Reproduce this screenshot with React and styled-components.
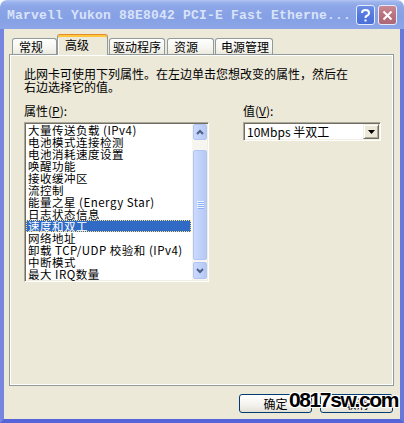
import React from 'react';
import styled, { createGlobalStyle } from 'styled-components';

const Global = createGlobalStyle`
  html, body { margin: 0; padding: 0; background: #fff; }
  #root { width: 404px; height: 423px; }
  * { box-sizing: border-box; }
`;

const CJK = `"Noto Sans CJK SC", "Noto Sans", sans-serif`;

const Window = styled.div`
  width: 404px;
  height: 423px;
  display: flex;
  flex-direction: column;
  font-family: ${CJK};
  font-size: 12px;
  color: #000;
`;

const TitleBar = styled.div`
  height: 29px;
  flex: none;
  display: flex;
  align-items: center;
  padding: 1px 7px 0 7px;
  border-radius: 7px 7px 0 0;
  background: linear-gradient(#b4c6f2 0, #9cb4ec 2px, #8ca6e7 6px, #86a0e5 60%, #8ca6e8 100%);
`;

const Title = styled.div`
  flex: 1;
  font-family: "Liberation Mono", monospace;
  font-weight: bold;
  font-size: 13px;
  letter-spacing: 0.2px;
  color: #d9e3f9;
  white-space: nowrap;
`;

const CaptionButton = styled.div`
  width: 19px;
  height: 20px;
  flex: none;
  border: 1px solid #e6ecfb;
  border-radius: 3px;
  display: flex;
  align-items: center;
  justify-content: center;
  margin-left: ${p => p.$ml}px;
  background: ${p => p.$bg};
`;

const Frame = styled.div`
  flex: 1;
  display: flex;
  flex-direction: column;
  background: #ece9d8;
  border-left: 4px solid #7585e0;
  border-right: 4px solid #6878da;
  border-bottom: 4px solid #5564d8;
  padding: 5px 6px 6px 5px;
`;

const TabRow = styled.div`
  height: 21px;
  display: flex;
  align-items: flex-end;
  position: relative;
  z-index: 1;
  padding-left: 3px;
`;

const Tab = styled.div`
  width: ${p => p.$w}px;
  margin-left: ${p => p.$ml || 0}px;
  padding-left: ${p => p.$pl}px;
  white-space: nowrap;
  border: 1px solid #919b9c;
  border-bottom: none;
  border-radius: 3px 3px 0 0;
  ${p => p.$active ? `
    height: 21px;
    line-height: 14px;
    padding-top: 3px;
    border-top: 1px solid #e68b2c;
    background: #ece9d8;
    box-shadow: inset 0 2px 0 #ffc83c, inset 1px 0 0 #fff;
  ` : `
    height: 16px;
    line-height: 16px;
    margin-bottom: 1px;
    background: linear-gradient(#fefefe, #f6f5f0 60%, #ebe9de);
  `}
`;

const Panel = styled.div`
  height: 332px;
  margin-top: -1px;
  border: 1px solid #919b9c;
  box-shadow: inset 1px 1px 0 #fff, inset -1px -1px 0 #fff;
  padding: 12px 14px 11px;
  display: flex;
  flex-direction: column;
`;

const Desc = styled.div`
  line-height: 13px;
`;

const Fields = styled.div`
  margin-top: 11px;
  display: grid;
  grid-template-columns: 185px 138px;
  column-gap: 34px;
  row-gap: 5px;
  align-items: start;
`;

const Label = styled.div`
  line-height: 13px;
  u { text-decoration: underline; }
`;

const ListBox = styled.div`
  height: 160px;
  display: flex;
  background: #fff;
  border-top: 1px solid #aca899;
  border-left: 1px solid #aca899;
  border-right: 1px solid #fff;
  border-bottom: 1px solid #fff;
  box-shadow: inset 1px 1px 0 #716f64, inset -1px -1px 0 #f1efe2;
  padding: 1px;
`;

const Items = styled.div`
  flex: 1;
  display: flex;
  flex-direction: column;
`;

const Item = styled.div`
  height: 12px;
  line-height: 12px;
  font-size: 11.5px;
  letter-spacing: 0.5px;
  padding-left: 2px;
  margin-right: 1px;
  white-space: nowrap;
  background: ${p => (p.$selected ? '#316ac5' : 'transparent')};
  color: ${p => (p.$selected ? '#fff' : '#000')};
  outline: ${p => (p.$selected ? '1px dotted #ffe080' : 'none')};
  outline-offset: -1px;
`;

const Scroll = styled.div`
  width: 15px;
  flex: none;
  display: flex;
  flex-direction: column;
  background: #f6f5ef;
  padding: 0 0 1px 1px;
`;

const ScrollButton = styled.div`
  width: 14px;
  height: ${p => p.$h}px;
  flex: none;
  border: 1px solid #b0c5f6;
  border-radius: 2px;
  background: linear-gradient(to right, #cbd9fd, #bccef8 70%, #b4c8f5);
  display: flex;
  align-items: center;
  justify-content: center;
`;

const Spacer = styled.div`
  height: ${p => p.$h}px;
  flex: ${p => (p.$grow ? 1 : 'none')};
`;

const Select = styled.div`
  height: 19px;
  display: flex;
  align-items: center;
  background: #fff;
  border-top: 1px solid #aca899;
  border-left: 1px solid #aca899;
  border-right: 1px solid #fff;
  border-bottom: 1px solid #fff;
  box-shadow: inset 1px 1px 0 #716f64, inset -1px -1px 0 #f1efe2;
  padding: 1px 1px 1px 3px;
`;

const SelectText = styled.div`
  flex: 1;
  line-height: 13px;
  white-space: nowrap;
`;

const DropButton = styled.div`
  width: 16px;
  height: 15px;
  flex: none;
  background: #ece9d8;
  border-top: 1px solid #f1efe2;
  border-left: 1px solid #f1efe2;
  border-right: 1px solid #716f64;
  border-bottom: 1px solid #716f64;
  box-shadow: inset 1px 1px 0 #fff, inset -1px -1px 0 #aca899;
  display: flex;
  align-items: center;
  justify-content: center;
`;

const ButtonRow = styled.div`
  margin-top: 8px;
  display: flex;
  justify-content: flex-end;
  gap: 8px;
  padding-right: 1px;
  position: relative;
`;

const Button = styled.div`
  width: 73px;
  height: 19px;
  border: 1px solid #003c74;
  border-radius: 3px;
  background: linear-gradient(#ffffff, #f3f2ee 60%, #e3e0d5);
  display: flex;
  align-items: center;
  justify-content: center;
  line-height: 13px;
`;

const Watermark = styled.div`
  position: absolute;
  right: -4px;
  top: -6px;
  font-family: "Liberation Sans", Arial, sans-serif;
  font-weight: bold;
  font-size: 21px;
  line-height: 24px;
  letter-spacing: -1.4px;
  color: #000;
  text-shadow: 0 0 2px #fff, 1px 1px 0 #fff, -1px -1px 0 #fff, 1px -1px 0 #fff, -1px 1px 0 #fff;
`;

const items = [
  '大量传送负载 (IPv4)',
  '电池模式连接检测',
  '电池消耗速度设置',
  '唤醒功能',
  '接收缓冲区',
  '流控制',
  '能量之星 (Energy Star)',
  '日志状态信息',
  '速度和双工',
  '网络地址',
  '卸载 TCP/UDP 校验和 (IPv4)',
  '中断模式',
  '最大 IRQ数量',
];

const tabs = [
  { label: '常规', w: 45, ml: 0, pl: 6 },
  { label: '高级', w: 51, ml: 0, pl: 7, active: true },
  { label: '驱动程序', w: 56, ml: 1, pl: 3 },
  { label: '资源', w: 47, ml: 2, pl: 6 },
  { label: '电源管理', w: 58, ml: 1, pl: 5 },
];

const Chevron = ({ up }) => (
  <svg width="8" height="6" viewBox="0 0 8 6">
    <path
      d={up ? 'M1 5 L4 2 L7 5' : 'M1 1 L4 4 L7 1'}
      fill="none"
      stroke="#4d6185"
      strokeWidth="2"
    />
  </svg>
);

export default function App() {
  return (
    <Window>
      <Global />
      <TitleBar>
        <Title>Marvell Yukon 88E8042 PCI-E Fast Etherne...</Title>
        <CaptionButton $bg="linear-gradient(#6e8fe6, #5378df 50%, #4a6fd8)" $ml={0}>
          <svg width="11" height="13" viewBox="0 0 11 13">
            <path d="M2 4 Q2 1 5.5 1 Q9 1 9 4 Q9 6 6.5 7 Q5.5 7.5 5.5 9" fill="none" stroke="#fff" strokeWidth="2" />
            <rect x="4.5" y="10.5" width="2" height="2" fill="#fff" />
          </svg>
        </CaptionButton>
        <CaptionButton $bg="linear-gradient(#c98a95, #b7727e 50%, #ad6875)" $ml={3}>
          <svg width="11" height="11" viewBox="0 0 11 11">
            <path d="M1.5 1.5 L9.5 9.5 M9.5 1.5 L1.5 9.5" stroke="#fff" strokeWidth="2" />
          </svg>
        </CaptionButton>
      </TitleBar>
      <Frame>
        <TabRow>
          {tabs.map(t => (
            <Tab key={t.label} $w={t.w} $ml={t.ml} $pl={t.pl} $active={t.active}>
              {t.label}
            </Tab>
          ))}
        </TabRow>
        <Panel>
          <Desc>
            此网卡可使用下列属性。在左边单击您想改变的属性，然后在
            <br />
            右边选择它的值。
          </Desc>
          <Fields>
            <Label>
              属性(<u>P</u>):
            </Label>
            <Label>
              值(<u>V</u>):
            </Label>
            <ListBox>
              <Items>
                {items.map((it, i) => (
                  <Item key={it} $selected={i === 8}>
                    {it}
                  </Item>
                ))}
              </Items>
              <Scroll>
                <ScrollButton $h={16}>
                  <Chevron up />
                </ScrollButton>
                <Spacer $h={10} />
                <ScrollButton $h={110}>
                  <svg width="7" height="8" viewBox="0 0 7 8">
                    <path d="M0 0.5 H7 M0 2.5 H7 M0 4.5 H7 M0 6.5 H7" stroke="#eef4fe" strokeWidth="1" />
                    <path d="M1 1.5 H7 M1 3.5 H7 M1 5.5 H7 M1 7.5 H7" stroke="#8cb0f8" strokeWidth="1" />
                  </svg>
                </ScrollButton>
                <Spacer $grow />
                <ScrollButton $h={17}>
                  <Chevron />
                </ScrollButton>
              </Scroll>
            </ListBox>
            <Select>
              <SelectText>10Mbps 半双工</SelectText>
              <DropButton>
                <svg width="7" height="4" viewBox="0 0 7 4">
                  <path d="M0 0 H7 L3.5 4 Z" fill="#000" />
                </svg>
              </DropButton>
            </Select>
          </Fields>
        </Panel>
        <ButtonRow>
          <Button>确定</Button>
          <Button>取消</Button>
          <Watermark>0817sw.com</Watermark>
        </ButtonRow>
      </Frame>
    </Window>
  );
}
